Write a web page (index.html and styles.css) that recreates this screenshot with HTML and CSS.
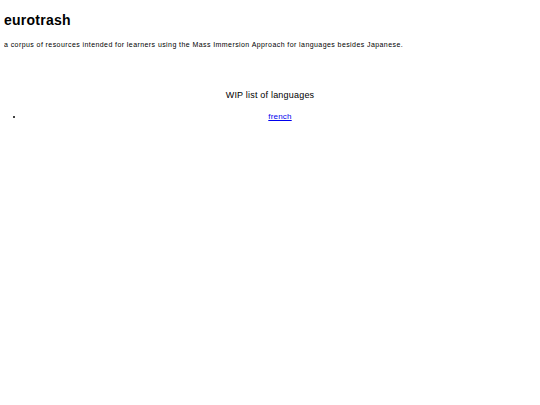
FILE: index.html
```html
<!DOCTYPE html>
<html>
<head>
<meta charset="utf-8">
<title>eurotrash</title>
<link rel="stylesheet" href="styles.css">
</head>
<body>
<h1 class="title">eurotrash</h1>
<p class="desc">a corpus of resources intended for learners using the Mass Immersion Approach for languages besides Japanese.</p>
<h2 class="sub">WIP list of languages</h2>
<ul class="langs">
<li><a href="#">french</a></li>
</ul>
</body>
</html>
```
FILE: styles.css
```css
body {
  margin: 4px;
  font-family: "Liberation Sans", Arial, sans-serif;
  color: #000;
  background: #fff;
}
.title {
  font-size: 14px;
  font-weight: bold;
  letter-spacing: 0.25px;
  margin: 8px 0 13px;
}
.desc {
  font-size: 7px;
  letter-spacing: 0.42px;
  margin: 0;
}
.sub {
  font-size: 9px;
  font-weight: normal;
  letter-spacing: 0.2px;
  text-align: center;
  margin: 42px 0 0;
}
.langs {
  margin: 12px 0 0;
  padding-left: 20px;
  font-size: 8px;
  letter-spacing: 0.2px;
}
.langs li {
  text-align: center;
}
.langs a {
  color: #0000ee;
  text-decoration: underline;
}
```
